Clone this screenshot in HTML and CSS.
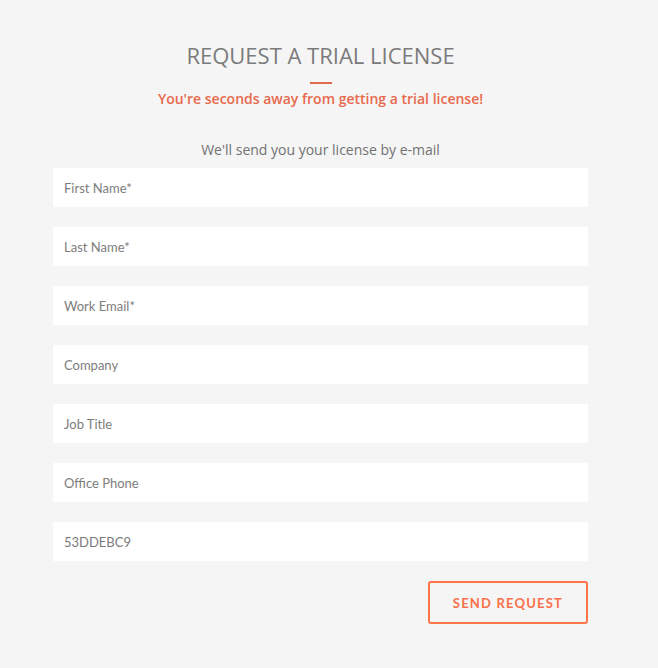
FILE: index.html
```html
<!DOCTYPE html>
<html>
<head>
<meta charset="utf-8">
<link rel="stylesheet" href="styles.css">
</head>
<body>
<div class="page">
  <h1 class="title">REQUEST A TRIAL LICENSE</h1>
  <div class="rule"></div>
  <p class="subtitle">You're seconds away from getting a trial license!</p>
  <p class="intro">We'll send you your license by e-mail</p>
  <form class="form">
    <input class="field" type="text" placeholder="First Name*">
    <input class="field" type="text" placeholder="Last Name*">
    <input class="field" type="text" placeholder="Work Email*">
    <input class="field" type="text" placeholder="Company">
    <input class="field" type="text" placeholder="Job Title">
    <input class="field" type="text" placeholder="Office Phone">
    <input class="field filled" type="text" value="53DDEBC9">
    <div class="actions">
      <button class="send" type="button">SEND REQUEST</button>
    </div>
  </form>
</div>
</body>
</html>
```
FILE: styles.css
```css
html, body {
  margin: 0;
  padding: 0;
  background: #f5f5f5;
}
body {
  width: 658px;
  height: 668px;
  font-family: "Open Sans", sans-serif;
}
.page {
  width: 535px;
  margin: 0 0 0 53px;
  padding-top: 41px;
  display: flex;
  flex-direction: column;
  align-items: center;
}
.title {
  margin: 0;
  font-family: "Open Sans", sans-serif;
  font-weight: 400;
  font-size: 22px;
  line-height: 28px;
  color: #7b7b7b;
  letter-spacing: 0;
}
.rule {
  width: 22px;
  height: 2px;
  background: #e2694c;
  margin-top: 13px;
}
.subtitle {
  margin: 5px 0 0;
  font-size: 14px;
  line-height: 20px;
  font-weight: 600;
  color: #e8694d;
}
.intro {
  margin: 31px 0 0;
  font-size: 14px;
  line-height: 20px;
  color: #727272;
}
.form {
  width: 100%;
  margin-top: 8px;
  display: flex;
  flex-direction: column;
  gap: 20px;
}
.field {
  box-sizing: border-box;
  width: 100%;
  height: 39px;
  border: none;
  outline: none;
  background: #fff;
  padding: 0 11px;
  margin: 0;
  font-family: "Lato", sans-serif;
  font-size: 13px;
  color: #7a7a7a;
}
.field::placeholder {
  color: #7d7d7d;
  opacity: 1;
}
.actions {
  display: flex;
  justify-content: flex-end;
}
.send {
  box-sizing: border-box;
  width: 160px;
  height: 43px;
  border: 2px solid #ff7449;
  border-radius: 3px;
  background: transparent;
  color: #f9704a;
  font-family: "Lato", sans-serif;
  font-weight: 700;
  font-size: 13px;
  letter-spacing: 1.2px;
  cursor: pointer;
}
```
